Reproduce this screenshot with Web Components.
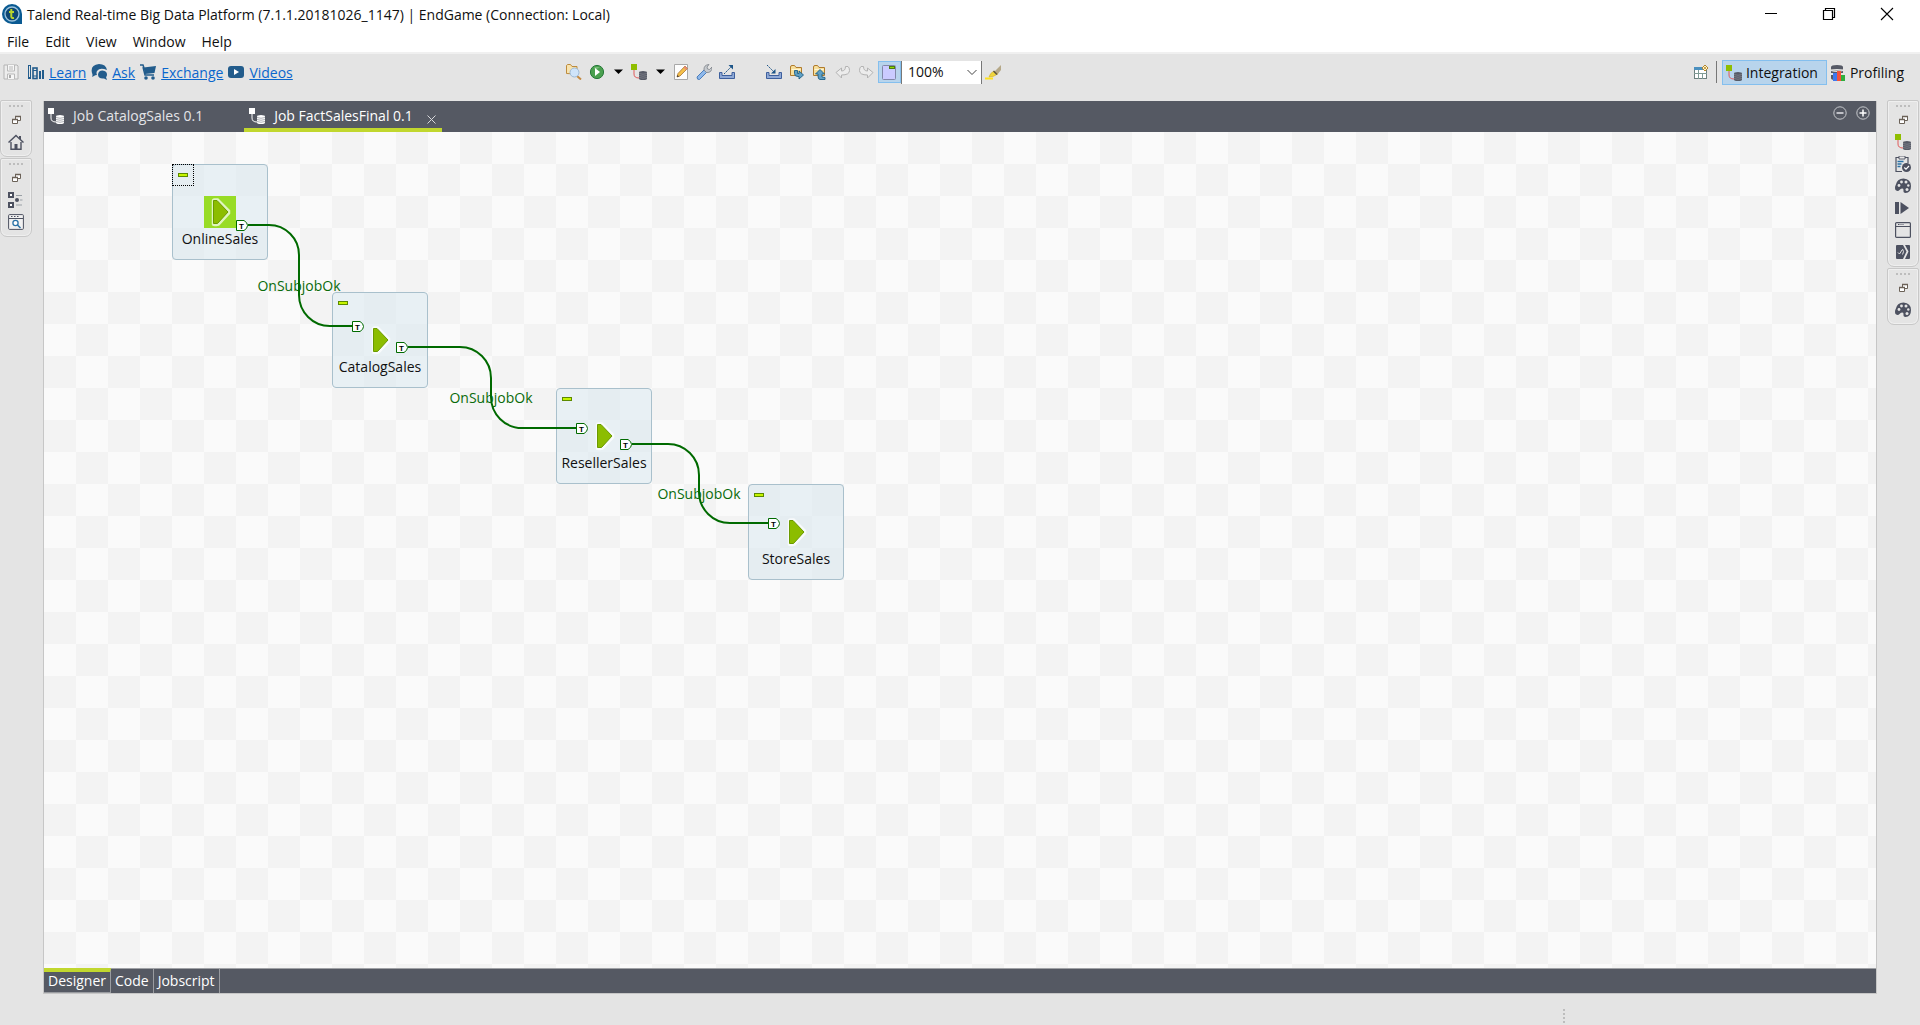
<!DOCTYPE html>
<html lang="en">
<head>
<meta charset="utf-8">
<title>Talend Real-time Big Data Platform</title>
<style>
  body { margin: 0; font: 14px/20px "Open Sans", "Noto Sans", sans-serif; color: #101010; background: #e4e4e4; }
</style>
</head>
<body>
<studio-app></studio-app>
<script>
const JOB = (square, line, db) => `
  <path d="M3 6v4q0 4 5 4h1" fill="none" stroke="${line}"/>
  <rect width="6" height="6" fill="${square}"/>
  <path d="M8 8.500q0-1.500 4-1.500t4 1.500v6q0 1.500-4 1.500t-4-1.500z" fill="${db}"/>
  <path d="M8 9.500q4 1.500 8 0M8 11.500q4 1.500 8 0M8 13.500q4 1.500 8 0" fill="none" stroke="#fff" stroke-opacity=".35" stroke-width=".6"/>`;

const FOLDER = `<path d="M1.500 11.500V3q0-1.500 1.500-1.500h2.500l1.500 2h5.500v8z" fill="#f7df9b" stroke="#b07b2c"/><path d="M2.500 5.500h9" stroke="#fff6d2"/>`;

const ICONS = {
  logo: `<path d="M10 0A10 10 0 1 0 10 20H20V10A10 10 0 0 0 10 0z" fill="#0a5a92"/><circle cx="10" cy="10" r="7" fill="#0f4672" stroke="#9cc3dc" stroke-width="1.300"/><path d="M9.300 5v7.500q0 2 2.700 1.500M7 8h5" fill="none" stroke="#b9d32c" stroke-width="2"/>`,
  save: `<path d="M1 1h13l1 1v13H1z" fill="#ededed" stroke="#b4b4b4"/><path d="M4.500 1v6h7V1M4.500 15v-5h7v5M6 3h4M6 5h4" fill="#f7f7f7" stroke="#b9b9b9"/><rect x="6" y="11" width="2" height="3" fill="#aaa"/>`,
  learn: `<g fill="none" stroke="#225c8c"><rect x=".5" y="1.500" width="2" height="13"/><rect x="5" y="4" width="4" height="10.500" stroke-width="1.600"/><path d="M5 6.500h4M5 12h4"/></g><rect x="11" y="7" width="2" height="8" fill="#225c8c"/><rect x="14" y="6" width="2" height="9" fill="#225c8c"/><rect y="13" width="3" height="2" fill="#225c8c"/>`,
  ask: `<path d="M8 0q7 0 8 6Q9 3 6 7q-1 2 0 4-2 0-3 1l-2 1q1-2 0-4Q-1 1 8 0z" fill="#225c8c"/><path d="M11.500 6.500q4.500.500 4.500 4 0 2-1 2.500l1 3-3-1.500q-6 .5-6-4 .5-4 4.500-4z" fill="#225c8c"/>`,
  cart: `<path d="M0 1h3l1 3M3 3l2 8h9" fill="none" stroke="#225c8c" stroke-width="1.500"/><path d="M3.500 3.500L16 2l-1.500 7-9.500 1z" fill="#225c8c"/><circle cx="6" cy="14" r="1.800" fill="#225c8c"/><circle cx="13" cy="14" r="1.800" fill="#225c8c"/>`,
  video: `<rect y="2" width="16" height="12" rx="3" fill="#225c8c"/><path d="M6 5v6l5-3z" fill="#fff"/>`,
  search: `<path d="M.5 9.500V2q0-1 1-1.500h3l1.500 2h5v7.500z" fill="#f8e3ae" stroke="#bd8b3d"/><path d="M11 12l4 3.500" stroke="#c58a42" stroke-width="2"/><circle cx="8.500" cy="8.500" r="4.500" fill="#cfe4fa" stroke="#9cb9d6"/>`,
  run: `<circle cx="8" cy="8" r="6.600" fill="#4aa04f" stroke="#28793a"/><path d="M5 3.500q4-1 6 0l-5 2z" fill="#9fd49a" opacity=".6"/><path d="M6 4v8l5-4z" fill="#fff"/>`,
  caret: `<path d="M0 5.500h9L4.500 10z" fill="#000"/>`,
  jobColor: JOB('#8fbe00', '#e05a5a', '#565a66'),
  jobWhite: JOB('#fff', '#fff', '#fff').replace(/stroke="#fff" stroke-opacity=".35"/, 'stroke="#565a66" stroke-opacity=".8"'),
  edit: `<path d="M1.500.5h13v15h-13z" fill="#fdfdfd" stroke="#a8a8a8"/><path d="M4 13l1-3.500 7-7.500 2.500 2.500-7.500 7.500z" fill="#f5c04a" stroke="#a97432" stroke-width=".8"/><path d="M10.500 3.500l2.500 2.500 1.500-1.500L12 2z" fill="#e78c77"/><path d="M4 13l.5-2 1.500 1.500z" fill="#333"/>`,
  wrench: `<path d="M1 13l7.500-7.500 2.500 2.500L3.500 15.500Q1 16 1 13z" fill="#8eb8ea" stroke="#4a7dbc"/><path d="M8 6Q7.500 1 13 .5L11 3l.5 2 2 .5L16 3q0 6-5.500 5.500z" fill="#c7cbd0" stroke="#7c8288" stroke-width=".8"/>`,
  export: `<path d="M.5 8.500H3v3h10v-3h2.500v6H.5z" fill="#8fa9d6" stroke="#3d5f9d"/><path d="M5 10l8-8" stroke="#1d5588" stroke-dasharray="2 1"/><path d="M9.500 1H14v4.500z" fill="#1d5588"/>`,
  import: `<path d="M.5 8.500H3v3h10v-3h2.500v6H.5z" fill="#8fa9d6" stroke="#3d5f9d"/><path d="M1 1l7 7" stroke="#1d5588" stroke-dasharray="2 1"/><path d="M9.500 5v4.500H5z" fill="#1d5588"/>`,
  folderRight: FOLDER + `<path d="M5.500 6.500v3q0 3 3.500 3h1v2.500l4.500-4-4.500-4v2.500H8.500v-3z" fill="#5f9fc4" stroke="#1e5f85" stroke-width=".9"/>`,
  folderUp: FOLDER + `<path d="M10 15.500H8q-2 0-2-3.500V10H3.500L8 5.500l4.500 4.500H10v3l3 .5v2z" fill="#5f9fc4" stroke="#1e5f85" stroke-width=".9"/>`,
  undo: `<path d="M1 8.500L6.500 4v3q4 0 4-4.500h2.500q1.500 1 1.500 4 0 4.500-8 4.500v3z" fill="#ececec" stroke="#b3b3b3"/>`,
  redo: `<path d="M15 8.500L9.500 4v3q-4 0-4-4.500H3Q1.500 3.500 1.500 6.500q0 4.500 8 4.500v3z" fill="#ececec" stroke="#b3b3b3"/>`,
  subjob: `<rect x="1.500" y="1.500" width="13" height="14" rx="1" fill="#cbcbff" stroke="#8288a8"/><rect x="8.500" y="2.500" width="5" height="2" fill="#8fdc00" stroke="#4d7d10"/>`,
  brush: `<path d="M16 1L9 8l3 3 4-5z" fill="#b5a888"/><path d="M9 7q-4 2-5 6 5 0 8.500-3z" fill="#f0d63c" stroke="#d3ae24" stroke-width=".6"/><path d="M8.500 7l3.500 3.500" stroke="#5b5344" stroke-width="1.500"/><path d="M0 14.500h8" stroke="#ffe21f" stroke-width="2"/>`,
  perspective: `<rect x="1.500" y="3.500" width="12" height="11" fill="#fff" stroke="#6d7f7d"/><rect x="1" y="3" width="9" height="3" fill="#4b90bf"/><path d="M1 9.500h13M5.500 6v9M9.500 9v6" stroke="#7f9b96"/><path d="M12 1l3 3-3 3-3-3z" fill="#fff4c9" stroke="#b3862b"/><path d="M12 3v2M11 4h2" stroke="#b3862b"/>`,
  profiling: `<path d="M1 2q0-2 6-2t6 2v2H1zM1 6q6 2 12 0v2H1zM1 10h4v5q-4 0-4-2z" fill="#565a66"/><path d="M1 4.500q6 2 12 0" stroke="#aaa" fill="none"/><rect x="3" y="8" width="4" height="8" fill="#3f78ee"/><rect x="7" y="6" width="4" height="10" fill="#f4523c"/><rect x="11" y="10" width="4" height="6" fill="#2fae3c"/>`,
  minimize: `<path d="M2 7.500h12" stroke="#000"/>`,
  maximize: `<path d="M2.500 4.500h9v9h-9zM4.500 4.500v-2h9v9h-2" fill="none" stroke="#000" stroke-width="1.200"/>`,
  close: `<path d="M2 2l12 12M14 2L2 14" stroke="#000" stroke-width="1.100"/>`,
  tabClose: `<path d="M3.500 3.500l8 8M11.500 3.500l-8 8" stroke="#d8d9dc"/>`,
  circleMinus: `<circle cx="8" cy="8" r="6.200" fill="none" stroke="#c6c8cc"/><path d="M4.500 8h7" stroke="#e4e5e8" stroke-width="1.500"/>`,
  circlePlus: `<circle cx="8" cy="8" r="6.200" fill="none" stroke="#c6c8cc"/><path d="M4.500 8h7M8 4.500v7" stroke="#fff" stroke-width="1.500"/>`,
  restore: `<path d="M4.500 7.500h5v4h-5zM7.500 7V4.500h5v4H10" fill="#fff" stroke="#6b6258"/><path d="M4 7.500h6M7 4.500h6" stroke="#6b6258" stroke-width="1.600"/>`,
  home: `<path d="M0 8l8-7.500 3 3V2h2v3.300L16 8l-1 1-7-6.500L1 9z" fill="#4d5160"/><path d="M3 8v7.200h10V8" fill="none" stroke="#4d5160" stroke-width="1.400"/><path d="M6.500 10h3v5.500h-3z" fill="#4d5160"/>`,
  outline: `<rect x="1" y="1" width="4" height="4" fill="#fff" stroke="#4d5160" stroke-width="2"/><rect x="1" y="11" width="4" height="4" fill="#fff" stroke="#4d5160" stroke-width="2"/><circle cx="9" cy="8" r="2" fill="#4d5160"/><path d="M8 3.500h6M12 8h2.500M8 13h6" stroke="#9aa0a6"/>`,
  repository: `<rect x=".6" y=".6" width="14.800" height="14.800" rx="1" fill="#f1f1f1" stroke="#4d5160"/><path d="M1 4.500h14M3 2.500h1.500M6 2.500h1.500M9 2.500h1.500" stroke="#4d5160"/><circle cx="7.500" cy="9" r="2.600" fill="#fff" stroke="#2a72a6" stroke-width="1.300"/><path d="M9.500 11l3 3" stroke="#2a72a6" stroke-width="1.500"/>`,
  clipboard: `<path d="M7 15.500H1v-14h12V7" fill="none" stroke="#4d5160" stroke-width="1.200"/><path d="M4 0h6v3H4z" fill="#e9e9e9" stroke="#4d5160" stroke-width=".9"/><path d="M2.500 5.500h6M2.500 8h4M2.500 10.500h3" stroke="#2a72a6" stroke-width="1.300"/><circle cx="11.500" cy="11.500" r="4.500" fill="#4d5160"/><path d="M9.300 11.500l1.700 1.700 3-3.200" fill="none" stroke="#fff" stroke-width="1.200"/>`,
  palette: `<path d="M8.500 .5Q16 1 16 8q0 7-5.500 7-2.500-.2-2-2.500.3-2-1.500-2-1.500.2-2.500 1.500Q3 14 .5 12-.5 9.500.5 7.500 2 .5 8.500.5z" fill="#4d5160"/><g fill="#e4e4e4"><circle cx="4" cy="7.500" r="1.400"/><circle cx="6.500" cy="4" r="1.400"/><circle cx="11" cy="4" r="1.500"/><circle cx="13.300" cy="7.500" r="1.200"/><circle cx="12" cy="11.500" r="1.500"/></g>`,
  step: `<rect y="2" width="4" height="12" fill="#4d5160"/><path d="M5.500 2v12l8.500-6z" fill="#4d5160"/>`,
  window: `<rect x=".6" y=".6" width="14.800" height="14.800" rx="1" fill="none" stroke="#4d5160" stroke-width="1.200"/><path d="M1 4.500h14M3 2.500h1.500M5.500 2.500h1M7.500 2.500h1" stroke="#4d5160"/>`,
  snippet: `<path d="M1 2q0-1 1-1h6l3.500 6.500L8 15H2q-1 0-1-1z" fill="#4d5160"/><path d="M10 1h4q1 0 1 1v12q0 1-1 1h-4l3.500-7.500z" fill="#4d5160"/><path d="M3 8.500l1.500 1.500L7 6M7.500 5q2 2.500 0 5.500" fill="none" stroke="#e4e4e4"/>`,
  chevron: `<path d="M3.500 6l4.500 4.500L12.500 6" fill="none" stroke="#444"/>`
};

const BUTTON_RESET = `button { all: unset; box-sizing: border-box; display: flex; align-items: center; font: inherit; color: inherit; cursor: default; }`;

function define(name, render) {
  customElements.define(name, class extends HTMLElement {
    connectedCallback() {
      if (this.shadowRoot) return;
      this.attachShadow({ mode: 'open' }).innerHTML = render(this);
    }
  });
}

define('ui-icon', el => {
  const size = el.getAttribute('size') || 16;
  const width = el.getAttribute('width') || size;
  return `<style>:host { display: block; flex: none; } svg { display: block; }</style>
    <svg width="${width}" height="${size}" viewBox="0 0 ${width} ${size}" aria-hidden="true">${ICONS[el.getAttribute('name')]}</svg>`;
});

define('title-bar', () => `
  <style>
    :host { display: flex; align-items: center; height: 28px; padding: 0 4px 0 2px; background: #fff; gap: 5px; }
    h1 { margin: 0; padding-top: 1px; font: inherit; flex: 1; white-space: nowrap; }
    nav { display: flex; }
    ${BUTTON_RESET}
    button { width: 58px; height: 28px; justify-content: center; }
  </style>
  <ui-icon name="logo" size="20"></ui-icon>
  <h1><slot></slot></h1>
  <nav>
    <button aria-label="Minimize"><ui-icon name="minimize"></ui-icon></button>
    <button aria-label="Restore"><ui-icon name="maximize"></ui-icon></button>
    <button aria-label="Close"><ui-icon name="close"></ui-icon></button>
  </nav>`);

define('menu-bar', () => `
  <style>
    :host { display: flex; gap: 2px; height: 24px; background: #fff; border-bottom: 2px solid #f0f0f0; }
    ${BUTTON_RESET}
    button { padding: 3px 7px 0; }
  </style>
  <button>File</button><button>Edit</button><button>View</button><button>Window</button><button>Help</button>`);

define('help-link', el => `
  <style>
    :host { display: flex; align-items: center; gap: 5px; }
    a { color: #0a66cc; padding-top: 1px; }
  </style>
  <ui-icon name="${el.getAttribute('icon')}"></ui-icon><a href="#"><slot></slot></a>`);

define('tool-button', el => `
  <style>
    :host { display: block; }
    ${BUTTON_RESET}
    button { padding: 2px 3px 2px 2px; border: 1px solid transparent; }
    :host([caret]) button { gap: 9px; padding-right: 4px; }
    :host([pressed]) button { background: #b8d4ec; border-color: #84bfee; }
  </style>
  <button aria-label="${el.getAttribute('label')}"><ui-icon name="${el.getAttribute('icon')}"></ui-icon>${el.hasAttribute('caret') ? '<ui-icon name="caret" width="9"></ui-icon>' : ''}</button>`);

define('zoom-select', () => `
  <style>
    :host { display: grid; align-items: center; width: 81px; height: 23px; box-sizing: border-box; background: #fff; border: solid #777; border-width: 0 1px; }
    select, ui-icon { grid-area: 1 / 1; }
    select { appearance: none; border: 0; background: none; font: inherit; color: inherit; padding: 0 6px; width: 100%; height: 23px; outline: 0; }
    ui-icon { justify-self: end; padding-right: 1px; pointer-events: none; }
  </style>
  <select aria-label="Zoom"><option>100%</option></select>
  <ui-icon name="chevron"></ui-icon>`);

define('perspective-button', el => `
  <style>
    :host { display: block; }
    ${BUTTON_RESET}
    button { height: 25px; gap: 4px; padding: 2px 4px 0 2px; border: 1px solid transparent; }
    :host([selected]) button { padding: 2px 8px 0 3px; background: #b8d4ec; border-color: #84bfee; }
  </style>
  <button><ui-icon name="${el.getAttribute('icon')}"></ui-icon><slot></slot></button>`);

define('main-toolbar', () => `
  <style>
    :host { display: flex; align-items: center; height: 36px; margin-bottom: 10px; }
    .links { display: flex; align-items: center; gap: 5px; flex: 0 0 563px; box-sizing: border-box; }
    .tools { display: flex; align-items: center; }
    .gap { width: 24px; }
    .perspectives { display: flex; align-items: center; margin-left: auto; padding-right: 11px; }
    .rule { width: 1px; height: 22px; background: #777; margin: 0 5px 0 3px; }
  </style>
  <div class="links">
    <tool-button icon="save" label="Save"></tool-button>
    <help-link icon="learn">Learn</help-link>
    <help-link icon="ask">Ask</help-link>
    <help-link icon="cart">Exchange</help-link>
    <help-link icon="video">Videos</help-link>
  </div>
  <div class="tools">
    <tool-button icon="search" label="Find"></tool-button>
    <tool-button icon="run" label="Run" caret></tool-button>
    <tool-button icon="jobColor" label="Create job" caret></tool-button>
    <tool-button icon="edit" label="Edit"></tool-button>
    <tool-button icon="wrench" label="Settings"></tool-button>
    <tool-button icon="export" label="Export"></tool-button>
    <span class="gap"></span>
    <tool-button icon="import" label="Import"></tool-button>
    <tool-button icon="folderRight" label="Import items"></tool-button>
    <tool-button icon="folderUp" label="Export items"></tool-button>
    <tool-button icon="undo" label="Undo"></tool-button>
    <tool-button icon="redo" label="Redo"></tool-button>
    <tool-button icon="subjob" label="Show subjobs" pressed></tool-button>
    <zoom-select></zoom-select>
    <tool-button icon="brush" label="Highlight"></tool-button>
  </div>
  <div class="perspectives">
    <tool-button icon="perspective" label="Open perspective"></tool-button>
    <span class="rule"></span>
    <perspective-button icon="jobColor" selected>Integration</perspective-button>
    <perspective-button icon="profiling">Profiling</perspective-button>
  </div>`);

define('trim-stack', el => `
  <style>
    :host { display: flex; flex-direction: column; align-items: center; box-sizing: border-box; width: 32px; padding: 4px 0 3px; border: 1px solid #c8c8c8; border-radius: 2px 2px 7px 7px; box-shadow: inset 0 0 0 1px #efefef; }
    .grip { width: 15px; height: 2px; margin-bottom: 2px; background: repeating-linear-gradient(90deg, #bdbdbd 0 2px, transparent 2px 4px); }
    ${BUTTON_RESET}
    button { height: 22px; }
  </style>
  <span class="grip"></span>
  ${el.getAttribute('items').split(' ').map(n => `<button aria-label="${n}"><ui-icon name="${n}"></ui-icon></button>`).join('')}`);

define('editor-tab', el => `
  <style>
    :host { display: flex; align-items: stretch; border-bottom: 4px solid transparent; color: #e3e4e8; }
    :host([selected]) { border-color: #c1d72e; color: #fff; }
    ${BUTTON_RESET}
    button { white-space: nowrap; }
    .tab { gap: 9px; padding: 3px 41px 0 4px; }
    :host([selected]) .tab { padding: 3px 11px 0 5px; }
    .x { padding: 10px 2px 0 0; }
  </style>
  <button class="tab" role="tab"><ui-icon name="jobWhite"></ui-icon><slot></slot></button>
  ${el.hasAttribute('selected') ? '<button class="x" aria-label="Close tab"><ui-icon name="tabClose"></ui-icon></button>' : ''}`);

define('editor-header', () => `
  <style>
    :host { display: flex; height: 31px; background: #555963; }
    .end { margin-left: auto; display: flex; gap: 7px; padding: 4px 5px 0 0; }
    ${BUTTON_RESET}
    button { height: 16px; }
  </style>
  <editor-tab>Job CatalogSales 0.1</editor-tab>
  <editor-tab selected>Job FactSalesFinal 0.1</editor-tab>
  <div class="end">
    <button aria-label="Minimize editor"><ui-icon name="circleMinus"></ui-icon></button>
    <button aria-label="Maximize editor"><ui-icon name="circlePlus"></ui-icon></button>
  </div>`);

define('sub-job', el => {
  const port = (x, y) => y === null ? '' : `<svg class="port" style="left:${x}px;top:${y}px" width="12" height="11"><path d="M.5.5h7.500q3.500 2 3.500 5t-3.500 5H.5z" fill="#fff" stroke="#006a00"/><text x="3" y="9" font-size="8" fill="#000">T</text></svg>`;
  return `
  <style>
    :host { position: absolute; left: ${el.getAttribute('x')}px; top: ${el.getAttribute('y')}px; width: 96px; height: 96px; box-sizing: border-box; border: 1px solid #a9c0cc; border-radius: 4px; background: rgba(217, 231, 239, .55); }
    .body { display: flex; flex-direction: column; align-items: center; gap: 1px; padding-top: 31px; }
    .comp { display: block; }
    .name { white-space: nowrap; }
    ${BUTTON_RESET}
    .fold { position: absolute; left: -1px; top: -1px; width: 22px; height: 22px; border: 1px dotted transparent; padding: 0 0 0 5px; }
    :host([selected]) .fold { border-color: #000; }
    :host([selected]) .comp { background: #98dc25; }
    .fold i { box-sizing: border-box; width: 10px; height: 4px; background: #c6f500; border: 1px solid #5c8a00; }
    .port { position: absolute; }
    text { font-family: "Liberation Sans", sans-serif; font-weight: bold; }
  </style>
  <button class="fold" aria-label="Collapse"><i></i></button>
  <div class="body">
    <svg class="comp" width="32" height="32"><path d="M9.500 5q0-1 1-1h3l11 11v2l-10 11q-5 1-5 0z" fill="none" stroke="#fff" stroke-opacity=".7" stroke-width="3.500"/><path d="M9.500 4.500h3.500l11 11.500-10.500 11.500h-4z" fill="#8cbd00" stroke="#6b9a00"/></svg>
    <span class="name"><slot></slot></span>
  </div>
  ${port(19, el.hasAttribute('in') ? +el.getAttribute('in') - 1 : null)}
  ${port(63, el.hasAttribute('out') ? +el.getAttribute('out') - 1 : null)}`;
});

define('job-link', el => `
  <style>
    :host { position: absolute; left: ${el.getAttribute('x')}px; top: ${el.getAttribute('y')}px; transform: translate(-50%, -50%); color: #0a6b0a; }
  </style><slot></slot>`);

define('job-canvas', () => `
  <style>
    :host { display: block; position: relative; flex: 1; min-height: 460px; overflow: hidden;
      background: repeating-conic-gradient(#f3f3f3 0 25%, #fafafa 0 50%) 0 0 / 64px 64px; }
    .wires { position: absolute; inset: 0; width: 100%; height: 100%; z-index: 1; pointer-events: none; }
  </style>
  <sub-job x="128" y="32" out="56" selected>OnlineSales</sub-job>
  <sub-job x="288" y="160" in="29" out="50">CatalogSales</sub-job>
  <sub-job x="512" y="256" in="35" out="51">ResellerSales</sub-job>
  <sub-job x="704" y="352" in="34">StoreSales</sub-job>
  <svg class="wires" fill="none" stroke="#006a00" stroke-width="2">
    <path d="M204 93H225A30 30 0 0 1 255 123V163A31 31 0 0 0 286 194H308"/>
    <path d="M364 215H416A31 31 0 0 1 447 246V265A31 31 0 0 0 478 296H532"/>
    <path d="M588 312H624A31 31 0 0 1 655 343V360A31 31 0 0 0 686 391H724"/>
  </svg>
  <job-link x="255" y="154">OnSubjobOk</job-link>
  <job-link x="447" y="266">OnSubjobOk</job-link>
  <job-link x="655" y="362">OnSubjobOk</job-link>`);

define('page-tabs', () => `
  <style>
    :host { display: flex; height: 24px; background: #555963; color: #fff; border-top: 1px solid #a0a2a6; }
    ${BUTTON_RESET}
    button { padding: 0 4px; border-right: 1px solid #999ba0; }
    button[aria-selected=true] { margin-top: -1px; border-top: 4px solid #c1d72e; padding-bottom: 3px; border-bottom: 1px solid #999ba0; }
  </style>
  <button role="tab" aria-selected="true">Designer</button>
  <button role="tab">Code</button>
  <button role="tab">Jobscript</button>`);

define('job-editor', () => `
  <style>
    :host { display: flex; flex-direction: column; flex: 1; min-width: 0; margin-top: 1px; border: solid #c6c6c6; border-width: 0 1px 1px; }
  </style>
  <editor-header></editor-header><job-canvas></job-canvas><page-tabs></page-tabs>`);

define('status-bar', () => `
  <style>
    :host { display: flex; justify-content: flex-end; height: 31px; padding-right: 355px; box-sizing: border-box; }
    span { width: 2px; height: 14px; margin-top: 15px; background: repeating-linear-gradient(#bdbdbd 0 2px, transparent 2px 4px); }
  </style><span></span>`);

define('studio-app', () => `
  <style>
    :host { display: flex; flex-direction: column; min-height: 100vh; }
    main { display: flex; flex: 1; }
    aside { display: flex; flex-direction: column; gap: 1px; width: 43px; flex: none; box-sizing: border-box; }
    .right { padding-left: 10px; }
  </style>
  <title-bar>Talend Real-time Big Data Platform (7.1.1.20181026_1147) | EndGame (Connection: Local)</title-bar>
  <menu-bar></menu-bar>
  <main-toolbar></main-toolbar>
  <main>
    <aside class="left">
      <trim-stack items="restore home"></trim-stack>
      <trim-stack items="restore outline repository"></trim-stack>
    </aside>
    <job-editor></job-editor>
    <aside class="right">
      <trim-stack items="restore jobColor clipboard palette step window snippet"></trim-stack>
      <trim-stack items="restore palette"></trim-stack>
    </aside>
  </main>
  <status-bar></status-bar>`);
</script>
</body>
</html>
